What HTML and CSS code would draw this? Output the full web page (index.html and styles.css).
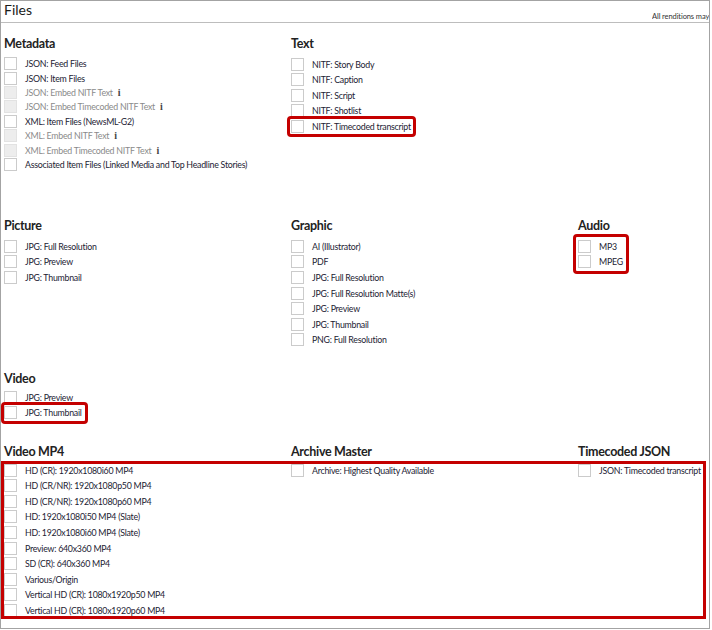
FILE: index.html
```html
<!DOCTYPE html>
<html>
<head>
<meta charset="utf-8">
<link rel="stylesheet" href="styles.css">
</head>
<body>
<div class="panel">
  <div class="panel-head">
    <div class="panel-title">Files</div>
    <div class="panel-note"><span>All renditions may not be available for all content</span></div>
  </div>
  <div class="panel-body">
    <div class="row row-first">
      <div class="group">
        <h3 class="group-title">Metadata</h3>
        <div class="list list-tight">
          <div class="item"><span class="box"></span><span class="label">JSON: Feed Files</span></div>
          <div class="item"><span class="box"></span><span class="label">JSON: Item Files</span></div>
          <div class="item is-disabled"><span class="box"></span><span class="label">JSON: Embed NITF Text</span><span class="info">i</span></div>
          <div class="item is-disabled"><span class="box"></span><span class="label">JSON: Embed Timecoded NITF Text</span><span class="info">i</span></div>
          <div class="item"><span class="box"></span><span class="label">XML: Item Files (NewsML-G2)</span></div>
          <div class="item is-disabled"><span class="box"></span><span class="label">XML: Embed NITF Text</span><span class="info">i</span></div>
          <div class="item is-disabled"><span class="box"></span><span class="label">XML: Embed Timecoded NITF Text</span><span class="info">i</span></div>
          <div class="item"><span class="box"></span><span class="label">Associated Item Files (Linked Media and Top Headline Stories)</span></div>
        </div>
      </div>
      <div class="group">
        <h3 class="group-title">Text</h3>
        <div class="list">
          <div class="item"><span class="box"></span><span class="label">NITF: Story Body</span></div>
          <div class="item"><span class="box"></span><span class="label">NITF: Caption</span></div>
          <div class="item"><span class="box"></span><span class="label">NITF: Script</span></div>
          <div class="item"><span class="box"></span><span class="label">NITF: Shotlist</span></div>
          <div class="mark mark-text">
            <div class="item"><span class="box"></span><span class="label">NITF: Timecoded transcript</span></div>
          </div>
        </div>
      </div>
      <div class="group"></div>
    </div>

    <div class="row">
      <div class="group">
        <h3 class="group-title">Picture</h3>
        <div class="list">
          <div class="item"><span class="box"></span><span class="label">JPG: Full Resolution</span></div>
          <div class="item"><span class="box"></span><span class="label">JPG: Preview</span></div>
          <div class="item"><span class="box"></span><span class="label">JPG: Thumbnail</span></div>
        </div>
      </div>
      <div class="group">
        <h3 class="group-title">Graphic</h3>
        <div class="list">
          <div class="item"><span class="box"></span><span class="label">AI (Illustrator)</span></div>
          <div class="item"><span class="box"></span><span class="label">PDF</span></div>
          <div class="item"><span class="box"></span><span class="label">JPG: Full Resolution</span></div>
          <div class="item"><span class="box"></span><span class="label">JPG: Full Resolution Matte(s)</span></div>
          <div class="item"><span class="box"></span><span class="label">JPG: Preview</span></div>
          <div class="item"><span class="box"></span><span class="label">JPG: Thumbnail</span></div>
          <div class="item"><span class="box"></span><span class="label">PNG: Full Resolution</span></div>
        </div>
      </div>
      <div class="group">
        <h3 class="group-title">Audio</h3>
        <div class="list">
          <div class="mark mark-audio">
            <div class="item"><span class="box"></span><span class="label">MP3</span></div>
            <div class="item"><span class="box"></span><span class="label">MPEG</span></div>
          </div>
        </div>
      </div>
    </div>

    <div class="row row-video">
      <div class="group">
        <h3 class="group-title">Video</h3>
        <div class="list">
          <div class="item"><span class="box"></span><span class="label">JPG: Preview</span></div>
          <div class="mark mark-video">
            <div class="item"><span class="box"></span><span class="label">JPG: Thumbnail</span></div>
          </div>
        </div>
      </div>
    </div>

    <div class="row row-last">
      <h3 class="group-title cell-1">Video MP4</h3>
      <h3 class="group-title cell-2">Archive Master</h3>
      <h3 class="group-title cell-3">Timecoded JSON</h3>
      <div class="list cell-4">
        <div class="item"><span class="box"></span><span class="label">HD (CR): 1920x1080i60 MP4</span></div>
        <div class="item"><span class="box"></span><span class="label">HD (CR/NR): 1920x1080p50 MP4</span></div>
        <div class="item"><span class="box"></span><span class="label">HD (CR/NR): 1920x1080p60 MP4</span></div>
        <div class="item"><span class="box"></span><span class="label">HD: 1920x1080i50 MP4 (Slate)</span></div>
        <div class="item"><span class="box"></span><span class="label">HD: 1920x1080i60 MP4 (Slate)</span></div>
        <div class="item"><span class="box"></span><span class="label">Preview: 640x360 MP4</span></div>
        <div class="item"><span class="box"></span><span class="label">SD (CR): 640x360 MP4</span></div>
        <div class="item"><span class="box"></span><span class="label">Various/Origin</span></div>
        <div class="item"><span class="box"></span><span class="label">Vertical HD (CR): 1080x1920p50 MP4</span></div>
        <div class="item"><span class="box"></span><span class="label">Vertical HD (CR): 1080x1920p60 MP4</span></div>
      </div>
      <div class="list cell-5">
        <div class="item"><span class="box"></span><span class="label">Archive: Highest Quality Available</span></div>
      </div>
      <div class="list cell-6">
        <div class="item"><span class="box"></span><span class="label">JSON: Timecoded transcript</span></div>
      </div>
      <div class="mark mark-wide"></div>
    </div>
  </div>
</div>
</body>
</html>
```

FILE: styles.css
```css
* { box-sizing: border-box; }

html, body {
  margin: 0;
  padding: 0;
  background: #ffffff;
}

body {
  font-family: Lato, "Noto Sans", "Liberation Sans", sans-serif;
  color: #1c2233;
}

.panel {
  width: 710px;
  height: 629px;
  border: 1px solid #a3a3a3;
  overflow: hidden;
  background: #fff;
}

.panel-head {
  height: 22px;
  border-bottom: 1px solid #bdbdbd;
  display: flex;
  align-items: flex-start;
  justify-content: space-between;
}

.panel-title {
  padding-left: 3px;
  font-size: 14px;
  line-height: 17px;
  color: #1a1a1a;
}

.panel-note {
  width: 57px;
  flex-shrink: 0;
  overflow: hidden;
  white-space: nowrap;
  font-size: 7.5px;
  line-height: 9px;
  padding-top: 11px;
  color: #333;
  letter-spacing: -0.1px;
}

.panel-body {
  padding-left: 3px;
}

.row {
  display: grid;
  grid-template-columns: 287px 287px 1fr;
  margin-top: 20px;
}

.row-first {
  margin-top: 12.5px;
  margin-bottom: 46px;
}

.row-video {
  margin-top: 24px;
}

.row-video .group-title {
  margin-bottom: 2px;
}

.row-last {
  margin-top: 20px;
  grid-template-rows: auto auto;
}

.row-last .group-title {
  margin-bottom: 3px;
}

.cell-1 { grid-row: 1; grid-column: 1; }
.cell-2 { grid-row: 1; grid-column: 2; }
.cell-3 { grid-row: 1; grid-column: 3; }
.cell-4 { grid-row: 2; grid-column: 1; }
.cell-5 { grid-row: 2; grid-column: 2; }
.cell-6 { grid-row: 2; grid-column: 3; }

.group-title {
  margin: 0 0 5px 0;
  font-size: 12.5px;
  line-height: 16px;
  font-weight: 700;
  letter-spacing: -0.3px;
  color: #222;
}

.list {
  display: flex;
  flex-direction: column;
}

.item {
  display: flex;
  align-items: center;
  height: 15.55px;
  font-size: 8.8px;
  letter-spacing: -0.25px;
  white-space: nowrap;
}

.list-tight {
  margin-top: 0.6px;
}

.list-tight .item {
  height: 14.4px;
}

.box {
  width: 13px;
  height: 13px;
  flex-shrink: 0;
  border: 1px solid #cbcbcb;
  background: #fff;
  margin-right: 8px;
}

.label {
  color: #1c2233;
}

.is-disabled .box {
  background: #ededed;
  border-color: #e2e2e2;
}

.is-disabled .label {
  color: #8a8a8a;
}

.info {
  margin-left: 5px;
  font-family: "Liberation Serif", "DejaVu Serif", serif;
  font-weight: 700;
  font-size: 10px;
  color: #444;
}

.mark {
  position: relative;
  border: 3px solid #c40000;
  border-radius: 4px;
  width: fit-content;
}

.mark-text {
  margin: -3px 0 0 -4px;
  padding: 0 2px 0 1px;
}

.mark-audio {
  margin: -4.4px 0 0 -5px;
  padding: 1.4px 3px 1.5px 2px;
}

.mark-video {
  margin: -3px 0 0 -3px;
  padding: 0 3px 0 0;
}

.mark-wide {
  grid-row: 2;
  grid-column: 1 / -1;
  width: auto;
  border-radius: 0;
  margin: -1.4px 3px -1px -3px;
  pointer-events: none;
}
```
